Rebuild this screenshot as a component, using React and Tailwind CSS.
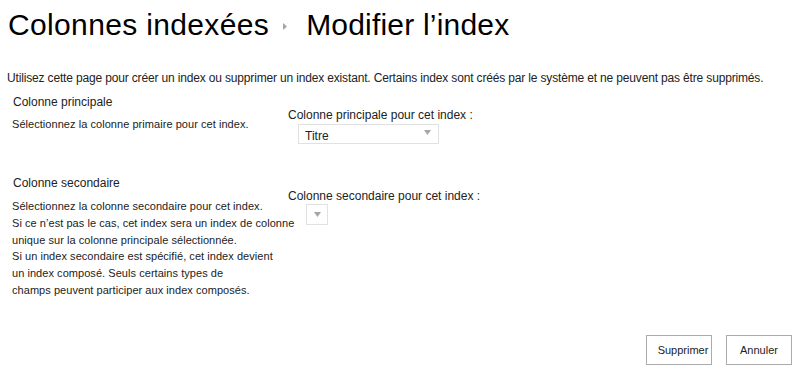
import React from "react";

function Caret({ className = "" }) {
  return (
    <svg width="7" height="5" viewBox="0 0 7 5" className={className}>
      <path d="M0 0 L7 0 L3.5 5 Z" fill="#a6a6a6" />
    </svg>
  );
}

export default function App() {
  return (
    <div className="w-[800px] h-[378px] bg-white text-[#222] font-['Liberation_Sans',Arial,sans-serif] relative overflow-hidden">
      <div className="flex items-center pl-[8px] pt-[7px] h-[43px] text-black">
        <span className="text-[30px] leading-[36px] tracking-[0.35px]">Colonnes indexées</span>
        <svg width="4" height="7" viewBox="0 0 4 7" className="ml-[14px] mr-[19px] mt-[2px]">
          <path d="M0 0 L4 3.5 L0 7 Z" fill="#a6a6a6" />
        </svg>
        <span className="text-[30px] leading-[36px] tracking-[0.2px]">Modifier l’index</span>
      </div>
      <p className="mt-[27px] pl-[7px] text-[12px] leading-[16px] whitespace-nowrap tracking-[-0.16px]">
        Utilisez cette page pour créer un index ou supprimer un index existant. Certains index sont créés par le système et ne peuvent pas être supprimés.
      </p>

      <div className="flex mt-[8px]">
        <div className="w-[288px] shrink-0 pl-[12px] whitespace-nowrap">
          <div className="text-[12px] leading-[16px] pl-[1px]">Colonne principale</div>
          <div className="text-[11px] leading-[16px] mt-[6px] tracking-[0.05px]">Sélectionnez la colonne primaire pour cet index.</div>
        </div>
        <div className="text-[12px] whitespace-nowrap">
          <div className="leading-[16px] mt-[13px]">Colonne principale pour cet index :</div>
          <div className="mt-[1px] ml-[10px] w-[141px] h-[20px] border border-[#e1e1e1] flex items-start justify-between pl-[6px] pr-[7px]">
            <span className="leading-[16px] pt-[3px]">Titre</span>
            <Caret className="mt-[5px]" />
          </div>
        </div>
      </div>

      <div className="flex mt-[31px]">
        <div className="w-[288px] shrink-0 pl-[12px] whitespace-nowrap">
          <div className="text-[12px] leading-[16px] pl-[1px]">Colonne secondaire</div>
          <div className="text-[11px] leading-[16.8px] mt-[7px] tracking-[0.05px]">
            Sélectionnez la colonne secondaire pour cet index.
            <br />
            Si ce n’est pas le cas, cet index sera un index de colonne
            <br />
            unique sur la colonne principale sélectionnée.
            <br />
            Si un index secondaire est spécifié, cet index devient
            <br />
            un index composé. Seuls certains types de
            <br />
            champs peuvent participer aux index composés.
          </div>
        </div>
        <div className="text-[12px] whitespace-nowrap">
          <div className="leading-[16px] mt-[13px]">Colonne secondaire pour cet index :</div>
          <div className="mt-[0px] ml-[18px] w-[22px] h-[21px] border border-[#e1e1e1] flex items-center justify-center">
            <Caret />
          </div>
        </div>
      </div>

      <div className="absolute left-[646px] top-[335px] flex gap-[14px] text-[11px]">
        <button className="w-[66px] h-[30px] border border-[#ababab] bg-white pl-[8px] text-[#222]">Supprimer</button>
        <button className="w-[66px] h-[30px] border border-[#ababab] bg-white text-[#222]">Annuler</button>
      </div>
    </div>
  );
}
